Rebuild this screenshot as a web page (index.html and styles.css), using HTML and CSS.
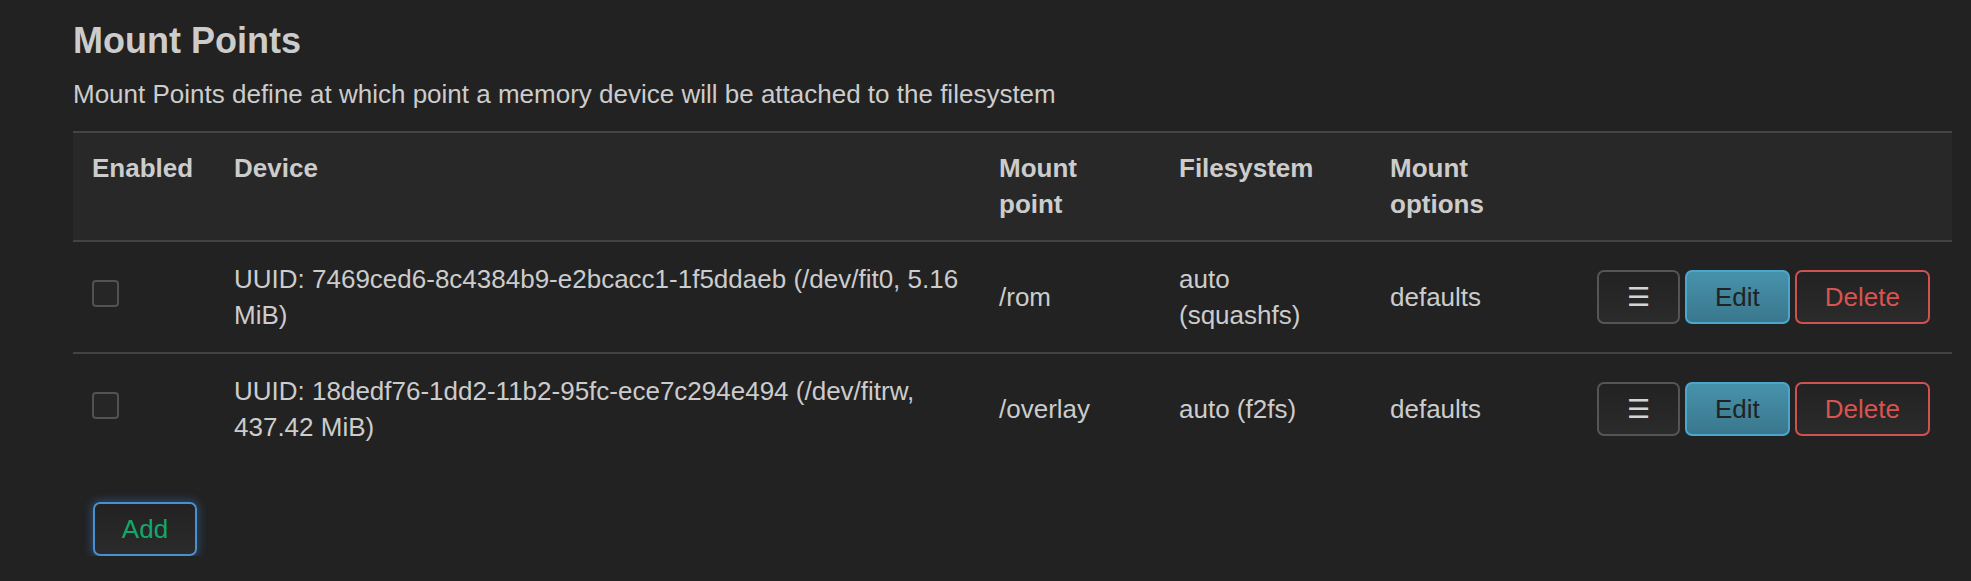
FILE: index.html
```html
<!DOCTYPE html>
<html lang="en">
<head>
<meta charset="utf-8">
<title>Mount Points</title>
<link rel="stylesheet" href="styles.css">
</head>
<body>
<div class="page">
  <h3 class="title">Mount Points</h3>
  <p class="desc">Mount Points define at which point a memory device will be attached to the filesystem</p>
  <table class="mounts">
    <thead>
      <tr>
        <th class="c-en">Enabled</th>
        <th class="c-dev">Device</th>
        <th class="c-mp">Mount point</th>
        <th class="c-fs">Filesystem</th>
        <th class="c-opt">Mount options</th>
        <th class="c-act"></th>
      </tr>
    </thead>
    <tbody>
      <tr class="row">
        <td><input type="checkbox" class="cb"></td>
        <td>UUID: 7469ced6-8c4384b9-e2bcacc1-1f5ddaeb (/dev/fit0, 5.16 MiB)</td>
        <td>/rom</td>
        <td>auto (squashfs)</td>
        <td>defaults</td>
        <td class="actions">
          <div class="btns">
            <button class="btn btn-menu">☰</button>
            <button class="btn btn-edit">Edit</button>
            <button class="btn btn-del">Delete</button>
          </div>
        </td>
      </tr>
      <tr class="row">
        <td><input type="checkbox" class="cb"></td>
        <td>UUID: 18dedf76-1dd2-11b2-95fc-ece7c294e494 (/dev/fitrw, 437.42 MiB)</td>
        <td>/overlay</td>
        <td>auto (f2fs)</td>
        <td>defaults</td>
        <td class="actions">
          <div class="btns">
            <button class="btn btn-menu">☰</button>
            <button class="btn btn-edit">Edit</button>
            <button class="btn btn-del">Delete</button>
          </div>
        </td>
      </tr>
    </tbody>
  </table>
  <div class="add-wrap">
    <button class="btn btn-add">Add</button>
  </div>
</div>
</body>
</html>
```
FILE: styles.css
```css
html, body {
  margin: 0;
  padding: 0;
  background: #222222;
}

body {
  font-family: "Liberation Sans", Arial, sans-serif;
  font-size: 26px;
  line-height: 36px;
  color: #cccccc;
}

.page {
  padding: 0 19px 0 73px;
}

.title {
  margin: 21px 0 0 0;
  font-size: 36px;
  line-height: 40px;
  font-weight: bold;
  color: #cccccc;
}

.desc {
  margin: 15px 0 0 0;
}

.mounts {
  margin-top: 19px;
  width: 1879px;
  table-layout: fixed;
  border-collapse: separate;
  border-spacing: 0;
}

.mounts th,
.mounts td {
  box-sizing: border-box;
}

.mounts th {
  background: #282828;
  border-top: 2px solid #444444;
  border-bottom: 2px solid #444444;
  padding: 17px 17px 18px 19px;
  text-align: left;
  vertical-align: top;
  font-weight: bold;
  color: #cccccc;
}

.c-en { width: 142px; }
.c-dev { width: 765px; }
.c-mp { width: 180px; }
.c-fs { width: 211px; }
.c-opt { width: 189px; }
.c-act { width: 392px; }

.mounts td {
  padding: 19px 17px 19px 19px;
  vertical-align: middle;
}

.row + .row td {
  border-top: 2px solid #444444;
}

.mounts td.actions {
  padding-right: 22px;
}

.cb {
  -webkit-appearance: none;
  appearance: none;
  display: block;
  margin: -4px 0 4px 0;
  width: 27px;
  height: 27px;
  box-sizing: border-box;
  border: 2px solid #525252;
  border-radius: 4px;
  background: #262626;
}

.btns {
  display: flex;
  justify-content: flex-end;
  gap: 5px;
}

.btn {
  flex-shrink: 0;
  box-sizing: border-box;
  height: 54px;
  padding: 7px 28px;
  border: 2px solid #555555;
  border-radius: 7px;
  font-family: "Liberation Sans", Arial, sans-serif;
  font-size: 26px;
  line-height: 36px;
  color: #cccccc;
  background: linear-gradient(#222222, #2b2b2b);
}

.btn-menu {
  width: 83px;
  padding: 7px 0;
  font-family: "DejaVu Sans", sans-serif;
  color: #d4d4d4;
}

.btn-edit {
  border-color: #4aa6cc;
  color: #222222;
  background: linear-gradient(#4692ab, #3a778d);
}

.btn-del {
  border-color: #d0524f;
  color: #d9534f;
}

.add-wrap {
  padding: 38px 0 0 20px;
}

.btn-add {
  width: 104px;
  padding: 7px 0;
  border-color: #4a8fd0;
  color: #13a86a;
  box-shadow: 0 0 8px 2px rgba(60, 140, 220, 0.35);
}
```
